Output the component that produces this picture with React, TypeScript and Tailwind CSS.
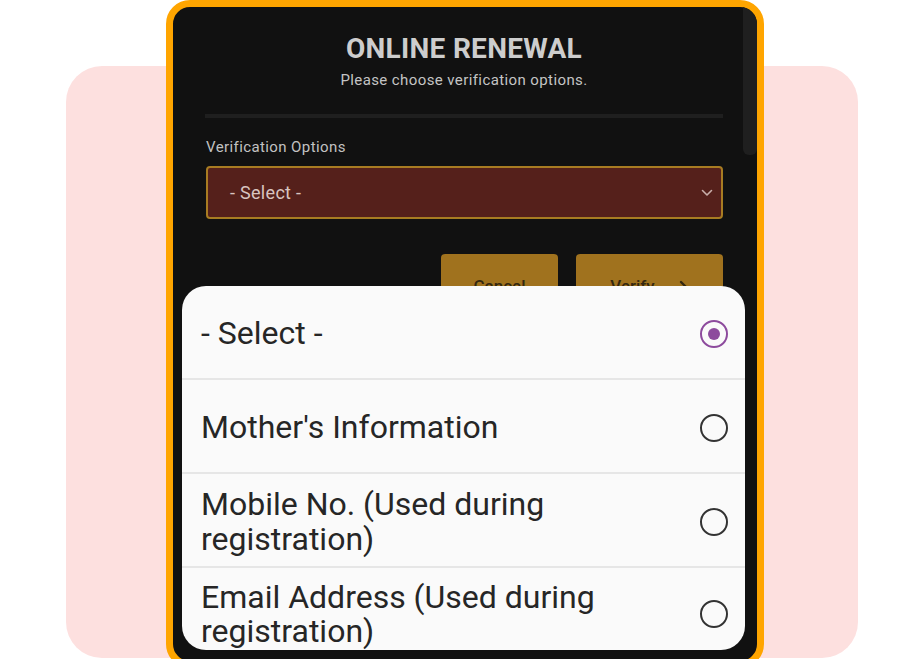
import React from 'react';

const options = [
  { label: '- Select -', selected: true },
  { label: "Mother's Information", selected: false },
  { label: 'Mobile No. (Used during registration)', selected: false },
  { label: 'Email Address (Used during registration)', selected: false },
];

const Radio: React.FC<{ selected: boolean }> = ({ selected }) =>
  selected ? (
    <div className="w-[28px] h-[28px] rounded-full border-[2.5px] border-[#8d4b9d] flex items-center justify-center shrink-0">
      <div className="w-[12px] h-[12px] rounded-full bg-[#8d4b9d]" />
    </div>
  ) : (
    <div className="w-[28px] h-[28px] rounded-full border-[2.5px] border-[#333] shrink-0" />
  );

export default function App() {
  return (
    <div
      className="relative w-[924px] h-[659px] overflow-hidden bg-white"
      style={{ fontFamily: 'Roboto, "Noto Sans", sans-serif' }}
    >
      {/* pink backdrop card */}
      <div className="absolute left-[66px] top-[66px] w-[792px] h-[592px] rounded-[36px] bg-[#fde0df]" />

      {/* phone frame */}
      <div className="relative ml-[166px] w-[598px] h-[668px] rounded-[24px] border-[7px] border-[#ffa500] bg-[#111111] overflow-hidden">
        <div className="absolute right-0 top-0 w-[14px] h-[148px] rounded-b-[6px] bg-[#1f1f1f]" />

        <div className="flex flex-col pl-[32px] pr-[34px] pt-[26px]">
          <h1 className="text-center text-[28px] leading-[32px] font-bold text-[#cdcdcd] tracking-[0.3px]">ONLINE RENEWAL</h1>
          <p className="text-center text-[15px] leading-[18px] text-[#c4c4c4] mt-[6px] tracking-[0.4px]">Please choose verification options.</p>
          <div className="h-[4px] bg-[#1f1f1f] mt-[25px]" />

          <label className="text-[15px] leading-[18px] text-[#c2c2c2] mt-[20px] pl-[1px] tracking-[0.4px]">Verification Options</label>
          <div className="mt-[10px] ml-[1px] h-[53px] rounded-[4px] border-2 border-[#a87c22] bg-[#55201b] flex items-center justify-between pl-[22px] pr-[8px]">
            <span className="text-[18px] text-[#d9c4c0] tracking-[0.3px]">- Select -</span>
            <svg width="12" height="8" viewBox="0 0 12 8" fill="none" stroke="#c9aeaa" strokeWidth="1.6" strokeLinecap="round" strokeLinejoin="round">
              <polyline points="1.5,1.5 6,6 10.5,1.5" />
            </svg>
          </div>

          <div className="flex justify-end gap-[18px] mt-[35px]">
            <button className="w-[117px] h-[66px] rounded-[4px] bg-[#a0721e] text-[17px] font-medium text-[#33270f] flex items-center justify-center">
              Cancel
            </button>
            <button className="w-[147px] h-[66px] rounded-[4px] bg-[#a0721e] text-[17px] font-medium text-[#33270f] flex items-center justify-center gap-[24px]">
              Verify
              <svg width="10" height="14" viewBox="0 0 10 14" fill="none" stroke="#33270f" strokeWidth="2.4" strokeLinecap="round" strokeLinejoin="round">
                <polyline points="2,2 7,7 2,12" />
              </svg>
            </button>
          </div>
        </div>

        {/* bottom sheet of options */}
        <div className="absolute left-[9px] top-[279px] w-[563px] h-[364px] rounded-[24px] bg-[#fafafa] overflow-hidden flex flex-col">
          {options.map((o, i) => {
            const last = i === options.length - 1;
            return (
              <div
                key={o.label}
                className={`shrink-0 flex items-center justify-between pl-[19px] pr-[17px] ${last ? 'h-[82px] pt-[9px]' : 'h-[94px] pt-[3px] border-b-2 border-[#e6e6e6]'}`}
              >
                <span className={`text-[32px] text-[#262626] w-[420px] ${last ? 'leading-[34px]' : 'leading-[35px]'}`}>{o.label}</span>
                <Radio selected={o.selected} />
              </div>
            );
          })}
        </div>
      </div>
    </div>
  );
}
